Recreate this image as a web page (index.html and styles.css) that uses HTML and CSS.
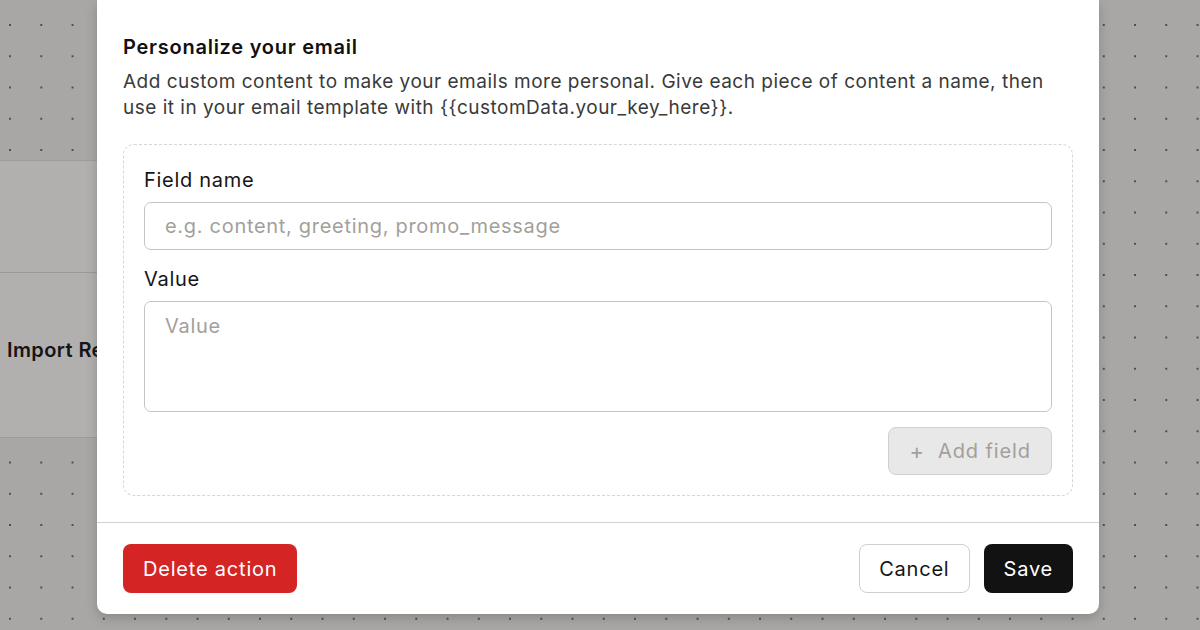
FILE: index.html
```html
<!DOCTYPE html>
<html lang="en">
<head>
<meta charset="utf-8">
<title>Personalize your email</title>
<link rel="stylesheet" href="styles.css">
</head>
<body>
<div class="canvas">
  <div class="node">
    <div class="node-head"></div>
    <div class="node-body"><span class="node-title">Import Recipients</span></div>
  </div>
  <div class="modal">
    <div class="modal-content">
      <h2 class="title">Personalize your email</h2>
      <p class="desc">Add custom content to make your emails more personal. Give each piece of content a name, then use it in your email template with {{customData.your_key_here}}.</p>
      <div class="fields">
        <div class="group">
          <label class="label">Field name</label>
          <input class="input" type="text" placeholder="e.g. content, greeting, promo_message">
        </div>
        <div class="group">
          <label class="label">Value</label>
          <textarea class="textarea" placeholder="Value"></textarea>
        </div>
        <div class="add-row">
          <button class="btn-add" disabled><span class="plus">+</span>Add field</button>
        </div>
      </div>
    </div>
    <div class="modal-footer">
      <button class="btn btn-danger">Delete action</button>
      <div class="right">
        <button class="btn btn-outline">Cancel</button>
        <button class="btn btn-dark">Save</button>
      </div>
    </div>
  </div>
</div>
</body>
</html>
```
FILE: styles.css
```css
* { box-sizing: border-box; }
html, body { margin: 0; padding: 0; }
body {
  width: 1200px;
  height: 630px;
  overflow: hidden;
  font-family: Inter, "Noto Sans", sans-serif;
  background: #a8a7a5;
}
.canvas {
  position: relative;
  width: 1200px;
  height: 630px;
  background-color: #a8a7a5;
  background-image: radial-gradient(circle, #4e4e4e 0.9px, transparent 1.1px);
  background-size: 31.25px 31.25px;
  background-position: -5.6px 9.4px;
}
.node {
  position: absolute;
  left: -200px;
  top: 160px;
  width: 300px;
  height: 278px;
  display: flex;
  flex-direction: column;
  background: #b1b0af;
  border-top: 1px solid #9d9c9b;
  border-bottom: 1px solid #9d9c9b;
}
.node-head {
  height: 112px;
  border-bottom: 1px solid #9a9998;
}
.node-body {
  flex: 1;
  display: flex;
  align-items: center;
  padding-left: 207px;
  padding-bottom: 10px;
}
.node-title {
  font-size: 20px;
  font-weight: 600;
  letter-spacing: 0.4px;
  color: #151515;
  white-space: nowrap;
}
.modal {
  position: absolute;
  left: 97px;
  top: 0;
  width: 1002px;
  background: #fff;
  border-radius: 0 0 10px 10px;
  box-shadow: 0 4px 12px rgba(0,0,0,0.18);
}
.modal-content {
  padding: 35px 26px 26px;
}
.title {
  margin: 0;
  font-size: 20px;
  line-height: 24px;
  font-weight: 600;
  letter-spacing: 0.75px;
  color: #111;
}
.desc {
  margin: 10px 0 0;
  font-size: 19px;
  line-height: 26px;
  letter-spacing: 0.5px;
  color: #3a3a3a;
}
.fields {
  margin-top: 23px;
  border: 1.5px dashed #d6d6d6;
  border-radius: 11px;
  padding: 22px 20px 20px;
  display: flex;
  flex-direction: column;
  gap: 16px;
}
.group {
  display: flex;
  flex-direction: column;
  gap: 9px;
}
.label {
  font-size: 20px;
  line-height: 26px;
  letter-spacing: 0.7px;
  color: #151515;
}
.input, .textarea {
  width: 100%;
  font-family: inherit;
  font-size: 20px;
  letter-spacing: 0.7px;
  color: #151515;
  border: 1.5px solid #c4c4c4;
  border-radius: 7px;
  padding: 0 20px;
  background: #fff;
  outline: none;
}
.input { height: 48px; }
.textarea {
  height: 111px;
  padding-top: 11px;
  line-height: 26px;
  resize: none;
  display: block;
}
.input::placeholder, .textarea::placeholder { color: #a39f9b; }
.add-row {
  display: flex;
  justify-content: flex-end;
  margin-top: -1px;
}
.btn-add {
  height: 48px;
  padding: 0 20px 0 21px;
  font-family: inherit;
  font-size: 20px;
  letter-spacing: 0.9px;
  color: #a39f9b;
  background: #e8e8e8;
  border: 1.5px solid #d0d0d0;
  border-radius: 8px;
  display: flex;
  align-items: center;
}
.plus {
  font-size: 22px;
  margin-right: 13px;
}
.modal-footer {
  border-top: 1.5px solid #d2d2d2;
  padding: 21px 26px 21px;
  display: flex;
  justify-content: space-between;
  align-items: center;
}
.right {
  display: flex;
  gap: 14px;
}
.btn {
  height: 49px;
  padding: 0 19px;
  font-family: inherit;
  font-size: 20px;
  letter-spacing: 0.8px;
  border-radius: 8px;
  border: 1.5px solid transparent;
}
.btn-danger { background: #d42424; color: #fff; }
.btn-outline { background: #fff; color: #151515; border-color: #cfcfcf; }
.btn-dark { background: #121212; color: #fff; }
```
